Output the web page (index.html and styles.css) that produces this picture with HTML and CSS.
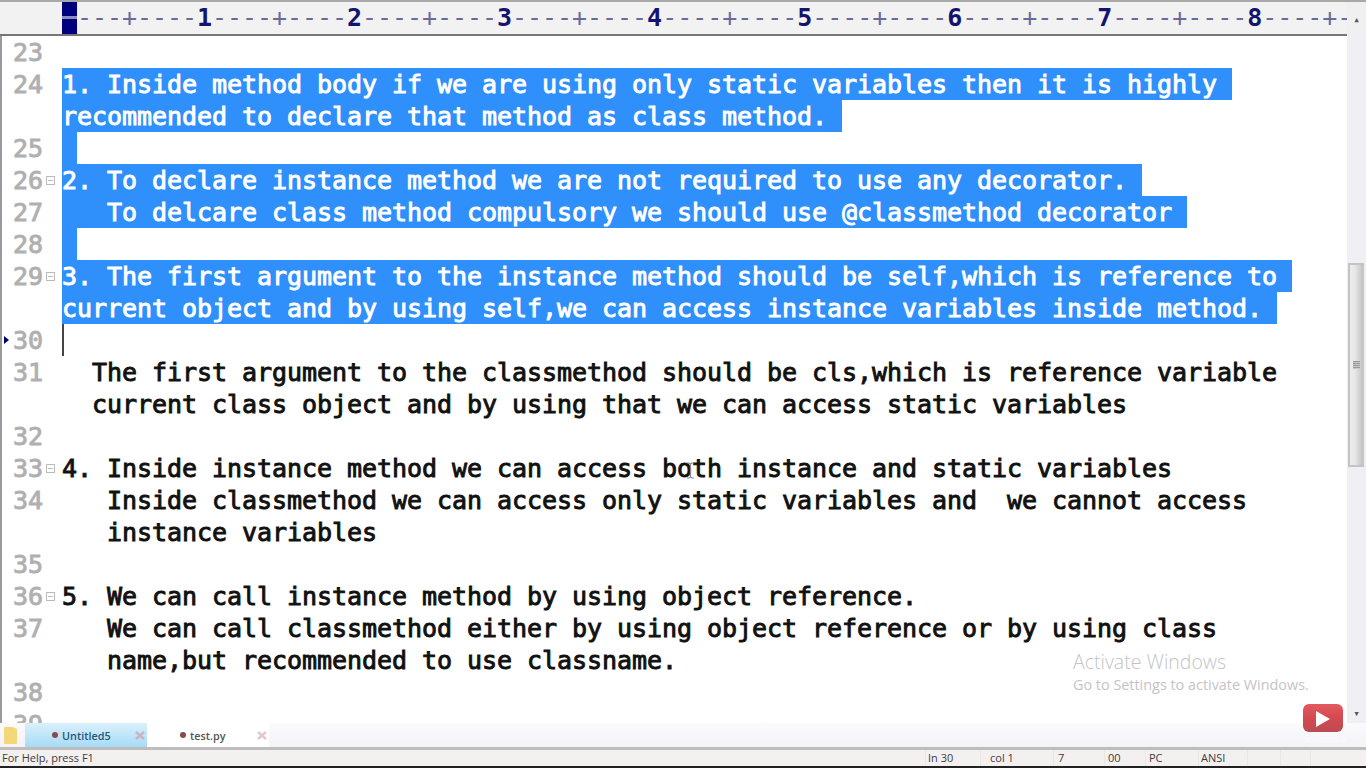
FILE: index.html
```html
<!DOCTYPE html>
<html lang="en">
<head>
  <meta charset="UTF-8">
  <title>Untitled5 - Editor</title>
  <link rel="stylesheet" href="styles.css">
</head>
<body>
<div class="window">
  <div class="ruler">
    <div class="ruler-track">
      <span class="ruler-cursor"></span>
      <div class="ruler-marks">---+----<b>1</b>----+----<b>2</b>----+----<b>3</b>----+----<b>4</b>----+----<b>5</b>----+----<b>6</b>----+----<b>7</b>----+----<b>8</b>----+<span class="last">-</span></div>
    </div>
    <div class="scroll-cap">&#9650;</div>
  </div>

  <div class="middle">
    <div class="editor">
      <div class="row"><span class="num">23</span><span class="fold"></span><span class="code"></span></div>
      <div class="row"><span class="num">24</span><span class="fold"></span><span class="code"><span class="sel">1. Inside method body if we are using only static variables then it is highly </span></span></div>
      <div class="row"><span class="num"></span><span class="fold"></span><span class="code"><span class="sel">recommended to declare that method as class method. </span></span></div>
      <div class="row"><span class="num">25</span><span class="fold"></span><span class="code"><span class="sel"> </span></span></div>
      <div class="row"><span class="num">26</span><span class="fold"><span class="box"></span></span><span class="code"><span class="sel">2. To declare instance method we are not required to use any decorator. </span></span></div>
      <div class="row"><span class="num">27</span><span class="fold"></span><span class="code"><span class="sel">   To delcare class method compulsory we should use @classmethod decorator </span></span></div>
      <div class="row"><span class="num">28</span><span class="fold"></span><span class="code"><span class="sel"> </span></span></div>
      <div class="row"><span class="num">29</span><span class="fold"><span class="box"></span></span><span class="code"><span class="sel">3. The first argument to the instance method should be self,which is reference to </span></span></div>
      <div class="row"><span class="num"></span><span class="fold"></span><span class="code"><span class="sel">current object and by using self,we can access instance variables inside method. </span></span></div>
      <div class="row"><span class="num"><span class="bookmark"></span>30</span><span class="fold"></span><span class="code"><span class="caret"></span></span></div>
      <div class="row"><span class="num">31</span><span class="fold"></span><span class="code">  The first argument to the classmethod should be cls,which is reference variable</span></div>
      <div class="row"><span class="num"></span><span class="fold"></span><span class="code">  current class object and by using that we can access static variables</span></div>
      <div class="row"><span class="num">32</span><span class="fold"></span><span class="code"></span></div>
      <div class="row"><span class="num">33</span><span class="fold"><span class="box"></span></span><span class="code">4. Inside instance method we can access both instance and static variables</span></div>
      <div class="row"><span class="num">34</span><span class="fold"></span><span class="code">   Inside classmethod we can access only static variables and  we cannot access</span></div>
      <div class="row"><span class="num"></span><span class="fold"></span><span class="code">   instance variables</span></div>
      <div class="row"><span class="num">35</span><span class="fold"></span><span class="code"></span></div>
      <div class="row"><span class="num">36</span><span class="fold"><span class="box"></span></span><span class="code">5. We can call instance method by using object reference.</span></div>
      <div class="row"><span class="num">37</span><span class="fold"></span><span class="code">   We can call classmethod either by using object reference or by using class</span></div>
      <div class="row"><span class="num"></span><span class="fold"></span><span class="code">   name,but recommended to use classname.</span></div>
      <div class="row"><span class="num">38</span><span class="fold"></span><span class="code"></span></div>
      <div class="row"><span class="num">39</span><span class="fold"></span><span class="code"></span></div>

      <!-- mouse pointer sitting on "both" -->
      <svg class="ibeam" width="9" height="17" viewBox="0 0 9 17">
        <path d="M1 1h2l1.500 1 1.500-1h2M4.500 2v13M1 16h2l1.500-1 1.500 1h2" fill="none" stroke="#8a8a8a" stroke-width="1.200"/>
      </svg>

      <div class="activate">
        <div class="activate-title">Activate Windows</div>
        <div class="activate-sub">Go to Settings to activate Windows.</div>
      </div>
    </div>
    <div class="scrollbar">
      <div class="scroll-track"><div class="scroll-thumb"><span class="grip"></span></div></div>
      <div class="scroll-down">&#9660;</div>
    </div>
  </div>

  <div class="tabbar">
    <div class="folder-cell">
      <svg width="15" height="19" viewBox="0 0 15 19"><path d="M1 2q0-1 1-1h8l4 2v14q0 1-1 1H2q-1 0-1-1z" fill="#f4d878"/></svg>
    </div>
    <div class="tab active"><span class="dot"></span>Untitled5<svg class="tab-x" width="10" height="9" viewBox="0 0 10 9"><path d="M1 1l8 7M9 1L1 8" stroke="#c9b4c4" stroke-width="2.500"/></svg></div>
    <div class="tab second"><span class="dot"></span>test.py<svg class="tab-x" width="10" height="9" viewBox="0 0 10 9"><path d="M1 1l8 7M9 1L1 8" stroke="#e2c6d0" stroke-width="2.500"/></svg></div>
  </div>

  <div class="status">
    <span class="help">For Help, press F1</span>
    <span class="cell c1">In 30</span>
    <span class="cell c2">col 1</span>
    <span class="cell c3">7</span>
    <span class="cell c4">00</span>
    <span class="cell c5">PC</span>
    <span class="cell c6">ANSI</span>
    <span class="cell c7"></span>
    <span class="cell c8"></span>
    <span class="cell c9"></span>
  </div>

  <div class="yt">
    <svg width="40" height="29" viewBox="0 0 40 29">
      <defs>
        <linearGradient id="ytRed" x1="0" y1="0" x2="0" y2="1">
          <stop offset="0" stop-color="#e25a60"/>
          <stop offset="0.5" stop-color="#d64850"/>
          <stop offset="1" stop-color="#bb4c52"/>
        </linearGradient>
      </defs>
      <rect x="0" y="0" width="40" height="28" rx="6" fill="url(#ytRed)"/>
      <path d="M13 7l14 8-14 8z" fill="#fff"/>
    </svg>
    <div class="yt-label">Subscribe</div>
  </div>
</div>
</body>
</html>
```

FILE: styles.css
```css
html, body {
  margin: 0;
  height: 100%;
  overflow: hidden;
  background: #fff;
}

.window {
  position: relative;
  display: flex;
  flex-direction: column;
  height: 768px;
  font-family: "DejaVu Sans Mono", monospace;
}

.ruler {
  display: flex;
  height: 36px;
  flex: none;
  background: #f2f2f2;
  border-top: 2px solid #a8a8a8;
  box-sizing: border-box;
}

.ruler-track {
  display: flex;
  flex: 1;
  min-width: 0;
  padding-left: 62px;
  border-bottom: 2px solid #777;
}

.ruler-cursor {
  width: 15px;
  flex: none;
  background: linear-gradient(#00007f, #00007f) top / 100% 14px no-repeat,
    linear-gradient(#00007f, #00007f) bottom / 100% 15px no-repeat,
    #8c8cc0;
}

.ruler-marks {
  font-size: 25px;
  letter-spacing: -0.05px;
  line-height: 32px;
  color: #6a6a9c;
  white-space: pre;
}

.ruler-marks b {
  color: #14146e;
}

.ruler-marks .last {
  letter-spacing: -5px;
}

.scroll-cap {
  width: 19px;
  flex: none;
  background: #f0f0f0;
  color: #555;
  font-size: 7px;
  line-height: 36px;
  text-align: center;
}

.middle {
  display: flex;
  flex: 1;
  min-height: 0;
}

.editor {
  position: relative;
  flex: 1;
  overflow: hidden;
  border-left: 2px solid #9a9a9a;
}

.row {
  display: flex;
  height: 32px;
  font-size: 25px;
  letter-spacing: -0.05px;
  line-height: 34px;
  white-space: pre;
  -webkit-text-stroke: 0.9px currentColor;
}

.num {
  position: relative;
  width: 44px;
  flex: none;
  padding-left: 11px;
  box-sizing: border-box;
  color: #b0b0b0;
}

.fold {
  display: flex;
  align-items: center;
  width: 16px;
  flex: none;
}

.box {
  width: 7px;
  height: 7px;
  border: 1px solid #bbb;
  background: linear-gradient(#bbb, #bbb) center / 5px 1px no-repeat;
}

.bookmark {
  position: absolute;
  left: 2px;
  top: 12px;
  border-left: 5px solid #00007f;
  border-top: 4px solid transparent;
  border-bottom: 4px solid transparent;
}

.code {
  flex: 1;
  color: #111;
}

.sel {
  display: inline-block;
  height: 32px;
  background: #2f8ffb;
  color: #fff;
}

.caret {
  display: inline-block;
  width: 2px;
  height: 32px;
  background: #444;
  vertical-align: top;
}

.ibeam {
  position: absolute;
  left: 684px;
  top: 426px;
}

.activate {
  position: absolute;
  left: 1071px;
  top: 613px;
  font-family: "Open Sans", sans-serif;
  color: #c4c4c4;
}

.activate-title {
  font-size: 19.500px;
  font-weight: 300;
  line-height: 26px;
}

.activate-sub {
  font-size: 14.400px;
  line-height: 20px;
}

.scrollbar {
  display: flex;
  flex-direction: column;
  width: 19px;
  flex: none;
  background: #f0f0f4;
}

.scroll-track {
  flex: 1;
  padding-top: 227px;
}

.scroll-thumb {
  display: flex;
  align-items: center;
  justify-content: center;
  height: 204px;
  margin: 0 2px 0 1px;
  box-sizing: border-box;
  border: 2px solid #c4c4c4;
  background: linear-gradient(to right, #ececec, #e8e8e8 40%, #c6c6c6);
}

.grip {
  width: 7px;
  height: 8px;
  background: repeating-linear-gradient(#999 0 1px, #c8c8c8 1px 2px);
}

.scroll-down {
  height: 18px;
  color: #555;
  font-size: 7px;
  line-height: 18px;
  text-align: center;
}

.tabbar {
  display: flex;
  align-items: stretch;
  height: 24px;
  flex: none;
  background: linear-gradient(#fbfbfe, #f3f3f8);
  border-bottom: 3px solid #bdbdbd;
  font-family: "Open Sans", sans-serif;
  font-size: 10.800px;
  font-weight: 600;
}

.folder-cell {
  display: flex;
  align-items: center;
  width: 25px;
  padding-left: 3px;
  box-sizing: border-box;
}

.tab {
  display: flex;
  align-items: center;
  width: 122px;
  padding-left: 27px;
  box-sizing: border-box;
  color: #555;
  background: #fff;
}

.tab.second {
  padding-left: 33px;
}

.tab.active {
  background: linear-gradient(#d9f0fc, #a6dbf6);
  color: #2a5578;
}

.dot {
  width: 6px;
  height: 6px;
  margin-right: 4px;
  border-radius: 50%;
  background: #8a4a4a;
}

.tab-x {
  margin-left: auto;
  margin-right: 2px;
}

.status {
  display: flex;
  height: 18px;
  flex: none;
  background: #f4f0f0;
  border-bottom: 2px solid #222;
  box-sizing: border-box;
  font-family: "Open Sans", sans-serif;
  font-size: 11px;
  line-height: 16px;
  color: #3c3c3c;
}

.help {
  width: 925px;
  padding-left: 2px;
  box-sizing: border-box;
}

.cell {
  box-sizing: border-box;
  border-left: 1px solid #ebe6e6;
}

.c1 { width: 55px; padding-left: 2px; }
.c2 { width: 73px; padding-left: 9px; }
.c3 { width: 51px; padding-left: 4px; }
.c4 { width: 41px; padding-left: 3px; }
.c5 { width: 53px; padding-left: 3px; }
.c6 { width: 49px; padding-left: 2px; }
.c7 { width: 33px; }
.c8 { width: 30px; }
.c9 { width: 37px; }

.yt {
  position: absolute;
  left: 1303px;
  top: 704px;
  width: 40px;
  line-height: 0;
}

.yt-label {
  font-family: "Open Sans", sans-serif;
  font-size: 9.500px;
  line-height: 12px;
  text-align: center;
  color: #fbfbfd;
}
```
